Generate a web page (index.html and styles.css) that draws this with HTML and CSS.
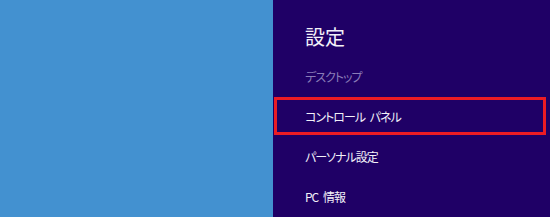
FILE: index.html
```html
<html>
<head>
    <link rel="stylesheet" href="styles.css">
</head>
<body>
    <div class="screen">
        <div class="desktop"></div>
        <div class="charm">
            <div class="charm-title">設定</div>
            <div class="charm-item dim">デスクトップ</div>
            <div class="charm-item selected">コントロール パネル</div>
            <div class="charm-item">パーソナル設定</div>
            <div class="charm-item">PC 情報</div>
        </div>
    </div>
</body>
</html>
```

FILE: styles.css
```css
body {
    margin: 0;
    background-color: #1f0066;
    font-family: "Noto Sans CJK JP", "Noto Sans", sans-serif;
}

.screen {
    display: flex;
    width: 550px;
    height: 217px;
    overflow: hidden;
}

.desktop {
    width: 273px;
    background-color: #4391d0;
}

.charm {
    flex: 1;
    background-color: #1f0066;
    display: flex;
    flex-direction: column;
    gap: 2px;
}

.charm-title {
    color: #f2f0f8;
    font-size: 20px;
    line-height: 20px;
    padding: 27px 0 8px 32px;
}

.charm-item {
    height: 38px;
    margin: 0 4px 0 1px;
    box-sizing: border-box;
    border: 3px solid transparent;
    padding-left: 28px;
    display: flex;
    align-items: center;
    color: #f2f0f8;
    font-size: 12px;
    letter-spacing: -1px;
    word-spacing: 3px;
    white-space: pre;
    font-feature-settings: "palt";
}

.charm-item.dim {
    color: #8a7cb8;
}

.charm-item.selected {
    border-color: #ec1c24;
}
```
